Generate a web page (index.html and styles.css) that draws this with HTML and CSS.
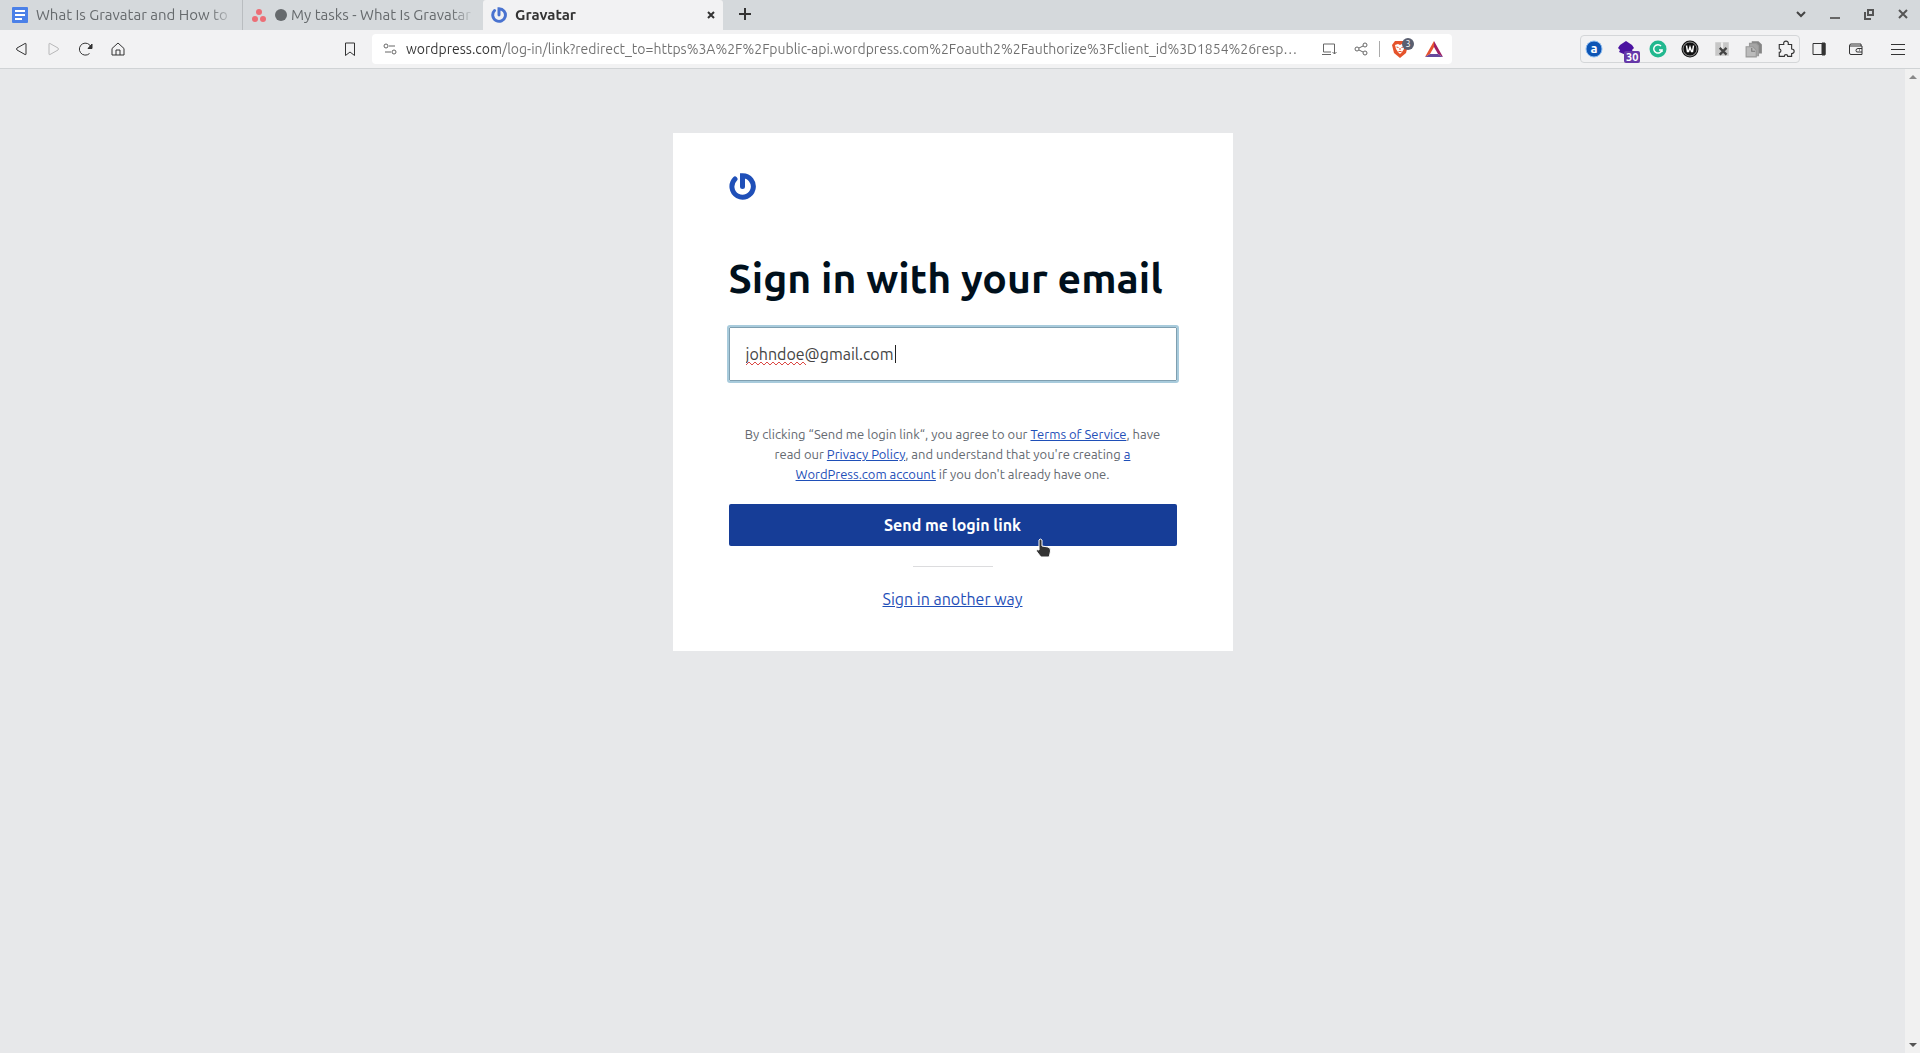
FILE: index.html
```html
<!DOCTYPE html>
<html lang="en">
<head>
    <meta charset="UTF-8">
    <meta name="viewport" content="width=device-width, initial-scale=1.0">
    <title>Gravatar</title>
    <link rel="stylesheet" href="styles.css">
</head>
<body>
    <header class="browser">
        <nav class="tabs" aria-label="Tabs">
            <a class="tab" href="#docs">
                <svg class="favicon" viewBox="0 0 16 16"><rect width="16" height="16" rx="1" fill="#4a80e8"/><path d="M3 4h10M3 8h10M3 12h7" stroke="#fff" stroke-width="2"/></svg>
                <span class="tab-title">What Is Gravatar and How to</span>
            </a>
            <a class="tab tasks" href="#tasks">
                <svg class="favicon" viewBox="0 0 16 16"><g fill="#ec6e76"><circle cx="8" cy="5" r="3"/><circle cx="4" cy="12" r="3"/><circle cx="12" cy="12" r="3"/></g></svg>
                <span class="dot"></span>
                <span class="tab-title">My tasks - What Is Gravatar</span>
            </a>
            <a class="tab active" href="#gravatar">
                <svg class="favicon" viewBox="0 0 27 27"><path d="M6 6A10.700 10.700 0 1 0 13.500 2.800V13.500" fill="none" stroke="#4a73d0" stroke-width="5" stroke-linecap="round"/></svg>
                <span class="tab-title">Gravatar</span>
                <svg class="tab-close" viewBox="0 0 8 8"><path d="M1 1l6 6M7 1l-6 6" stroke="#333" stroke-width="2"/></svg>
            </a>
            <button class="new-tab" aria-label="New tab"><svg width="12" height="12" viewBox="0 0 12 12"><path d="M6 0v12M0 6h12" stroke="#333" stroke-width="2"/></svg></button>
            <div class="window-buttons">
                <button aria-label="Search tabs"><svg width="12" height="12" viewBox="0 0 12 12"><path d="M2 4l4 4 4-4" fill="none" stroke="#444" stroke-width="2"/></svg></button>
                <button aria-label="Minimize"><svg width="12" height="12" viewBox="0 0 12 12"><path d="M1 10h10" stroke="#666" stroke-width="2"/></svg></button>
                <button aria-label="Restore"><svg width="12" height="12" viewBox="0 0 12 12"><path d="M5 2h5v5H5zM2 4v7h6" fill="none" stroke="#555" stroke-width="2"/></svg></button>
                <button aria-label="Close"><svg width="12" height="12" viewBox="0 0 12 12"><path d="M2 2l8 8M10 2l-8 8" stroke="#555" stroke-width="2"/></svg></button>
            </div>
        </nav>

        <div class="toolbar">
            <div class="nav-buttons">
                <button aria-label="Back"><svg viewBox="0 0 16 16"><path d="M12 3v10q0 1-1 .5L3 9q-1-1 0-2l8-4.500q1-.5 1 .5z"/></svg></button>
                <button aria-label="Forward" disabled><svg viewBox="0 0 16 16"><path d="M3 3v10q0 1 1 .5L12 9q1-1 0-2L4 2.500q-1-.5-1 .5z"/></svg></button>
                <button aria-label="Reload"><svg viewBox="0 0 16 16"><path d="M11.500 12.500A6 6 0 1 1 13 6"/><path d="M14 3v4.500H10z" fill="#333"/></svg></button>
                <button aria-label="Home"><svg viewBox="0 0 16 16"><path d="M2 7.500L8 2l6 5.500V14H2zM6 14V9h4v5"/></svg></button>
                <button class="bookmark" aria-label="Bookmark"><svg viewBox="0 0 16 16"><path d="M3.500 2h9v12.500L8 11l-4.500 3.500z"/></svg></button>
            </div>

            <div class="address">
                <svg class="site-settings" viewBox="0 0 16 16"><circle cx="4" cy="5" r="2"/><path d="M7 5h6M3 11h6"/><circle cx="12" cy="11" r="2"/></svg>
                <input class="url" type="text" aria-label="Address" readonly value="wordpress.com/log-in/link?redirect_to=https%3A%2F%2Fpublic-api.wordpress.com%2Foauth2%2Fauthorize%3Fclient_id%3D1854%26resp…">
                <button aria-label="Install"><svg viewBox="0 0 16 16"><path d="M10 11H2.500V3h11v6M1 13.500h9M13.500 8v5m-2-2l2 2 2-2"/></svg></button>
                <button aria-label="Share"><svg viewBox="0 0 16 16"><circle cx="4" cy="8" r="2"/><circle cx="12" cy="4" r="2"/><circle cx="12" cy="12" r="2"/><path d="M6 7l4-2M6 9l4 2"/></svg></button>
                <span class="divider"></span>
                <button class="shield" aria-label="Brave Shields"><svg viewBox="0 0 18 18"><path d="M4 1h10l3 4-2 8-6 5-6-5L1 5z" fill="#e5532b" stroke="none"/><path d="M4 5l3-1 2 1 2-1 3 1-1 4-2 3-2 2-2-2-2-3z" fill="#fff" stroke="none"/><path d="M5.500 7l2 .5M12.500 7l-2 .5M9 8v2M7.500 11.500h3" stroke="#e5532b"/></svg><span class="badge">3</span></button>
                <button aria-label="Brave Rewards"><svg viewBox="0 0 18 18"><path d="M9 1L0 17l5-3 4-7z" fill="#e6522f" stroke="none"/><path d="M9 1l9 16-5-3-4-7z" fill="#9e1f63" stroke="none"/><path d="M0 17h18l-5-3H5z" fill="#66489c" stroke="none"/></svg></button>
            </div>

            <div class="tools">
                <div class="extensions">
                    <button aria-label="Ahrefs"><svg viewBox="0 0 18 18"><circle cx="9" cy="9" r="8" fill="#0d55b5" stroke="#8dbcf0"/><text class="letter" x="9" y="13">a</text></svg></button>
                    <button class="stack" aria-label="Layers"><svg viewBox="0 0 18 18"><path d="M9 1l6 4 2 3-2 2 1 2-7 3-7-3 1-2-2-2 2-3z" fill="#4b13a0" stroke="none"/></svg><span class="count">30</span></button>
                    <button aria-label="Grammarly"><svg viewBox="0 0 18 18"><circle cx="9" cy="9" r="8.500" fill="#22b88f" stroke="none"/><path d="M12 6A4.200 4.200 0 1 0 13 10h-3M13 10v2" stroke="#fff" stroke-width="1.500"/></svg></button>
                    <button aria-label="Wayback"><svg viewBox="0 0 18 18"><circle cx="9" cy="9" r="8.500" fill="#111" stroke="none"/><circle cx="9" cy="9" r="7" stroke="#ccc" stroke-width=".7"/><path d="M5.500 5.500l1 6h1L9 7l1.500 4.500h1l1-6" stroke="#fff" stroke-width="1.500"/></svg></button>
                    <button aria-label="Page remover"><svg viewBox="0 0 16 16"><path d="M2 2h12v12H2z" fill="#c7c7c7" stroke="none"/><path d="M7 2v6h2V2" fill="#eee" stroke="none"/><path d="M6 7l6 6M12 7l-6 6" stroke="#444" stroke-width="2"/></svg></button>
                    <button aria-label="Copy pages"><svg viewBox="0 0 16 16"><path d="M6 1h6l3 3v8H6z" fill="#858585" stroke="none"/><path d="M4 3h6l2 2v9H4z" fill="#a5a5a5" stroke="#999"/><path d="M1 6h6l3 3v6H1z" fill="#bbb" stroke="#999"/><path d="M6 7v3h3" stroke="#777"/></svg></button>
                    <button aria-label="Extensions"><svg viewBox="0 0 16 16"><path d="M2 4h4c-1-4 5-4 4 0h3v4c3 0 3 4 0 4v2.500H9.500c0-2-3-2-3 0H2V11c2 0 2-3 0-3z"/></svg></button>
                </div>
                <button class="panel" aria-label="Side panel"><svg viewBox="0 0 16 16"><path d="M2 2.500h12v11H2z"/><path d="M11 2h3v12h-3z" fill="#333"/></svg></button>
                <button class="wallet" aria-label="Wallet"><svg viewBox="0 0 16 16"><path d="M13 5V3H3Q1.500 3 1.500 5v7q0 1.500 1.500 1.500h11V5H2M14 7.500h-4q-2 0-2 2t2 1.500h4M11 9h1"/></svg></button>
                <button class="menu" aria-label="Menu"><svg viewBox="0 0 16 16"><path d="M1 3.500h14M1 8.500h14M1 13.500h14"/></svg></button>
            </div>
        </div>
    </header>

    <div class="viewport">
        <main class="page">
            <form class="card">
                <svg class="logo" viewBox="0 0 28 28" role="img" aria-label="Gravatar"><path d="M6 6A10.700 10.700 0 1 0 13.500 2.800V13.500" fill="none" stroke="#1f4fb8" stroke-width="5" stroke-linecap="round"/></svg>
                <h1>Sign in with your email</h1>
                <div class="field">
                    <input type="text" id="email" aria-label="Email address" value="johndoe@gmail.com" spellcheck="false">
                    <svg class="squiggle" width="60" height="5" aria-hidden="true"><path d="M0 4l3-3 3 3 3-3 3 3 3-3 3 3 3-3 3 3 3-3 3 3 3-3 3 3 3-3 3 3 3-3 3 3 3-3 3 3 3-3 3 3" fill="none" stroke="#dc4a45"/></svg>
                    <span class="caret"></span>
                </div>
                <p class="terms">By clicking “Send me login link“, you agree to our <a href="#terms">Terms of Service</a>, have<br>read our <a href="#privacy">Privacy Policy</a>, and understand that you're creating <a href="#account">a<br>WordPress.com account</a> if you don't already have one.</p>
                <div class="action">
                    <button class="submit" type="button">Send me login link</button>
                    <svg class="pointer" viewBox="0 0 18 20" aria-hidden="true"><path d="M4 2q1-2 3 0v6l6 1q3 1 2.500 4l-1 5-1 1H6l-4-5q-2-3 2-2z" fill="#333" stroke="#fff"/></svg>
                </div>
                <hr>
                <a class="another" href="#another">Sign in another way</a>
            </form>
        </main>
        <div class="scrollbar" aria-hidden="true">
            <svg width="8" height="4" viewBox="0 0 8 4"><path d="M4 0l4 4H0z" fill="#8a8a8a"/></svg>
            <svg width="8" height="4" viewBox="0 0 8 4"><path d="M4 4L0 0h8z" fill="#555"/></svg>
        </div>
    </div>
</body>
</html>
```
FILE: styles.css
```css
:root {
    --strip: #d5d9dc;
    --toolbar: #f2f2f3;
    --page: #e7e8ea;
    --blue: #1f4fb8;
    --icon: #333;
}

* {
    box-sizing: border-box;
}

body {
    display: flex;
    flex-direction: column;
    min-height: 100vh;
    margin: 0;
    font-family: Ubuntu, "Noto Sans", sans-serif;
    font-size: 14px;
    color: #333;
    background: var(--page);
}

button {
    padding: 0;
    border: 0;
    background: none;
    font-family: inherit;
}

/* tab strip */
.tabs {
    display: flex;
    height: 30px;
    background: var(--strip);
}

.tab {
    display: flex;
    align-items: center;
    flex: 0 1 240px;
    min-width: 0;
    padding: 0 8px 0 12px;
    gap: 8px;
    color: #666a6d;
    font-size: 15px;
    text-decoration: none;
}

.tab:first-child {
    flex-basis: 243px;
    border-right: 1px solid #b9bdc0;
}

.tab.tasks {
    padding-left: 8px;
}

.tab.active {
    padding: 0 8px;
    background: var(--toolbar);
    border-radius: 3px 3px 0 0;
    color: #333;
    font-weight: 600;
}

.favicon {
    flex: none;
    width: 16px;
    height: 16px;
}

.dot {
    flex: none;
    width: 12px;
    height: 12px;
    margin-right: -4px;
    border-radius: 50%;
    background: #666a6d;
}

.tab-title {
    flex: 1;
    overflow: hidden;
    white-space: nowrap;
    line-height: 20px;
    mask-image: linear-gradient(to left, transparent, #000 24px);
}

.tab-close {
    flex: none;
    width: 8px;
    height: 8px;
}

.new-tab {
    width: 44px;
}

.window-buttons {
    display: flex;
    margin-left: auto;
}

.window-buttons button {
    width: 34px;
}

/* toolbar */
.toolbar {
    display: grid;
    grid-template-columns: 372px 1fr 468px;
    height: 39px;
    background: var(--toolbar);
    border-bottom: 1px solid #d0d3d5;
}

.toolbar button {
    display: flex;
    align-items: center;
    justify-content: center;
    width: 32px;
}

.toolbar svg {
    width: 16px;
    height: 16px;
    fill: none;
    stroke: var(--icon);
}

.nav-buttons,
.address,
.tools,
.extensions {
    display: flex;
    align-items: center;
}

.nav-buttons {
    padding: 0 6px;
}

.nav-buttons button:disabled {
    opacity: 0.3;
}

.nav-buttons .bookmark {
    margin-left: auto;
}

.address {
    height: 30px;
    margin-top: 4px;
    padding: 0 2px 0 10px;
    border-radius: 4px;
    background: #fff;
}

.address svg {
    stroke: #666;
}

.url {
    flex: 1;
    min-width: 0;
    margin-left: 8px;
    padding: 0;
    border: 0;
    outline: 0;
    font-family: inherit;
    font-size: 14px;
    line-height: 20px;
    text-overflow: ellipsis;
    /* the domain is darker than the rest of the address */
    color: transparent;
    background: linear-gradient(to right, #333 94px, #6f6f6f 94px);
    background-clip: text;
}

.divider {
    width: 1px;
    height: 16px;
    margin: 0 2px;
    background: #aaa;
}

.address .shield svg,
.address .shield + button svg,
.extensions svg {
    width: 18px;
    height: 18px;
}

.toolbar .shield {
    width: 36px;
}

.shield,
.stack {
    position: relative;
}

.badge {
    position: absolute;
    top: -2px;
    right: 4px;
    width: 12px;
    height: 12px;
    border-radius: 50%;
    background: #5a5f70;
    color: #fff;
    font-size: 9px;
    line-height: 12px;
}

.tools {
    justify-content: flex-end;
    gap: 2px;
}

.extensions {
    gap: 6px;
    height: 28px;
    border: 1px solid #d4d6d8;
    border-radius: 4px;
}

.extensions button {
    width: 26px;
}

.tools .panel {
    width: 34px;
}

.tools .wallet {
    width: 36px;
}

.tools .menu {
    width: 44px;
}

.letter {
    fill: #fff;
    stroke: none;
    font-size: 13px;
    font-weight: 700;
    text-anchor: middle;
}

.count {
    position: absolute;
    top: 11px;
    left: 11px;
    padding: 0 2px;
    border-radius: 2px;
    background: #6638a8;
    color: #fff;
    font-size: 11px;
    font-weight: 700;
    line-height: 12px;
}

/* page */
.viewport {
    display: flex;
    flex: 1;
}

.page {
    flex: 1;
    padding: 64px 16px;
}

.card {
    display: flex;
    flex-direction: column;
    max-width: 560px;
    margin: 0 auto;
    padding: 40px 56px;
    background: #fff;
}

.logo {
    width: 28px;
    height: 28px;
}

h1 {
    margin: 48px 0 20px;
    color: #00101c;
    font-size: 41px;
    font-weight: 700;
    line-height: 58px;
}

.field,
.action {
    position: relative;
}

.field input {
    display: block;
    width: 100%;
    height: 54px;
    padding: 0 16px;
    border: 1px solid #7f9fb0;
    border-radius: 1px;
    outline: 2px solid #a8cbdc;
    color: #444;
    font-family: inherit;
    font-size: 16px;
}

.squiggle {
    position: absolute;
    left: 17px;
    top: 34px;
}

.caret {
    position: absolute;
    left: 166px;
    top: 18px;
    width: 1px;
    height: 18px;
    background: #222;
}

.terms {
    margin: 43px 0 20px;
    color: #646970;
    font-size: 13px;
    line-height: 20px;
    text-align: center;
}

.terms a,
.another {
    color: var(--blue);
}

.submit {
    width: 100%;
    height: 42px;
    border-radius: 2px;
    background: #163d97;
    color: #fff;
    font-size: 16px;
    font-weight: 700;
}

.pointer {
    position: absolute;
    left: 306px;
    top: 34px;
    width: 18px;
    height: 20px;
}

hr {
    width: 80px;
    margin: 20px auto;
    border: 0;
    border-top: 1px solid #dcdcde;
}

.another {
    align-self: center;
    font-size: 16px;
    line-height: 24px;
}

.scrollbar {
    display: flex;
    flex-direction: column;
    align-items: center;
    justify-content: space-between;
    width: 15px;
    padding: 6px 0;
    background: #f1f1f1;
}
```
